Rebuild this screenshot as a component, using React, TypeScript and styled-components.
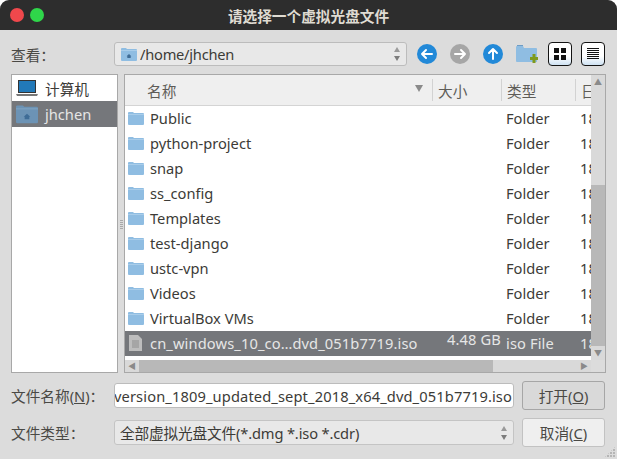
import React from "react";
import styled, { createGlobalStyle } from "styled-components";

const GlobalStyle = createGlobalStyle`
  html, body {
    margin: 0;
    padding: 0;
    background: #ffffff;
  }
  * {
    box-sizing: border-box;
  }
`;

const fontStack = `"Noto Sans", "Noto Sans CJK SC", sans-serif`;

const Dialog = styled.div`
  position: relative;
  width: 617px;
  height: 459px;
  display: flex;
  flex-direction: column;
  background: #dcdcdc;
  border-radius: 9px 9px 0 0;
  overflow: hidden;
  font-family: ${fontStack};
  font-size: 14.67px;
  color: #3c3b37;
`;

const TitleBar = styled.div`
  position: relative;
  height: 30px;
  flex: none;
  display: flex;
  align-items: center;
  justify-content: center;
  background: #2d2d2d;
  color: #dfdbd2;
  font-size: 14.67px;
  font-weight: 700;
`;

const WindowButtons = styled.div`
  position: absolute;
  left: 10px;
  top: 8px;
  display: flex;
  gap: 6px;
`;

const WindowButton = styled.span<{ $color: string }>`
  width: 14px;
  height: 14px;
  border-radius: 50%;
  background: ${(p) => p.$color};
`;

const Body = styled.div`
  flex: 1;
  display: flex;
  flex-direction: column;
  padding: 12px 11px 0 11px;
`;

const Toolbar = styled.div`
  height: 24px;
  display: flex;
  align-items: center;
`;

const FieldLabel = styled.label`
  width: 103px;
  flex: none;
  color: #4a4945;
`;

const Underlined = styled.span`
  text-decoration: underline;
`;

const PathCombo = styled.div`
  width: 293px;
  height: 24px;
  flex: none;
  display: flex;
  align-items: center;
  gap: 3px;
  padding-left: 6px;
  border: 1px solid #bcbcbc;
  border-radius: 3px;
  background: #e8e8e8;
  letter-spacing: -0.25px;
`;

const ComboText = styled.span`
  flex: 1;
  white-space: nowrap;
  overflow: hidden;
  color: #3c3b37;
`;

const ToolIcons = styled.div`
  display: flex;
  align-items: center;
  margin-left: 10px;
  height: 24px;
`;

const NavIcon = styled.span`
  display: flex;
  width: 20px;
  height: 20px;
  margin-right: 13px;
`;

const NewFolderIcon = styled.span`
  display: flex;
  margin-right: 9px;
  margin-left: -1px;
`;

const ViewButton = styled.span<{ $last?: boolean }>`
  width: 24px;
  height: 24px;
  display: flex;
  align-items: center;
  justify-content: center;
  margin-right: ${(p) => (p.$last ? 0 : "9px")};
  border: 1px solid #141414;
  border-radius: 4px;
  background: linear-gradient(#ffffff 60%, #cfe2f3);
`;

const Browser = styled.div`
  display: flex;
  gap: 6px;
  height: 299px;
  margin-top: 8px;
`;

const Sidebar = styled.div`
  width: 107px;
  flex: none;
  border: 1px solid #a8a8a8;
  background: #ffffff;
`;

const SideItem = styled.div<{ $selected?: boolean }>`
  height: 26px;
  display: flex;
  align-items: center;
  gap: 7px;
  padding-left: 4px;
  background: ${(p) => (p.$selected ? "#75777b" : "transparent")};
  color: ${(p) => (p.$selected ? "#e6e6e6" : "#3c3b37")};
`;

const FileList = styled.div`
  position: relative;
  width: 482px;
  flex: none;
  display: grid;
  grid-template-columns: 466px 14px;
  grid-template-rows: 285px 12px;
  border: 1px solid #a8a8a8;
  background: #ffffff;
`;

const ListMain = styled.div`
  min-width: 0;
  overflow: hidden;
`;

const Grip = styled.span`
  position: absolute;
  left: -5px;
  top: 145px;
  width: 3px;
  height: 10px;
  background: repeating-linear-gradient(#a9a9a9 0 1px, transparent 1px 2px);
`;

const Header = styled.div`
  height: 31px;
  display: grid;
  grid-template-columns: 308px 69px 74px 1fr;
  background: #efefef;
  border-bottom: 1px solid #d4d4d4;
`;

const HeaderCell = styled.div<{ $inset?: number }>`
  display: flex;
  align-items: center;
  justify-content: space-between;
  padding-left: ${(p) => p.$inset ?? 5}px;
  padding-right: 10px;
  color: #5e5c57;
  white-space: nowrap;
  overflow: hidden;
  position: relative;
  &:not(:last-child)::after {
    content: "";
    position: absolute;
    right: 0;
    top: 4px;
    bottom: 4px;
    width: 1px;
    background: #d2d2d2;
  }
`;

const SortArrow = styled.span`
  width: 0;
  height: 0;
  border-left: 4px solid transparent;
  border-right: 4px solid transparent;
  border-top: 7px solid #8a8a8a;
  margin-top: -4px;
`;

const Row = styled.div<{ $selected?: boolean }>`
  height: 25px;
  display: grid;
  grid-template-columns: 308px 69px 74px 1fr;
  align-items: center;
  padding-bottom: 2px;
  background: ${(p) => (p.$selected ? "#75777b" : "transparent")};
  color: ${(p) => (p.$selected ? "#e6e6e6" : "#3c3b37")};
  letter-spacing: ${(p) => (p.$selected ? "0.12px" : "0")};
  white-space: nowrap;
`;

const NameCell = styled.div`
  display: flex;
  align-items: center;
  gap: 6px;
  padding-left: 3px;
  overflow: hidden;
`;

const SizeCell = styled.div`
  text-align: right;
  padding-right: 1px;
  margin-top: -8px;
`;

const TextCell = styled.div`
  padding-left: 4px;
  overflow: hidden;
`;

const VScroll = styled.div`
  display: flex;
  flex-direction: column;
  background: #d9d9d9;
`;

const HScroll = styled.div`
  display: flex;
  background: #d9d9d9;
`;

const Arrow = styled.span<{ $box: "v" | "h" }>`
  flex: none;
  display: flex;
  align-items: center;
  justify-content: center;
  width: 14px;
  height: ${(p) => (p.$box === "v" ? "14px" : "12px")};
  color: #8a8a8a;
  font-size: 8px;
  line-height: 1;
`;

const VTrack = styled.div`
  flex: 1;
  display: flex;
  flex-direction: column;
  padding-top: 96px;
`;

const VThumb = styled.div`
  flex: 1;
  background: #b8b8b8;
`;

const HTrack = styled.div`
  flex: 1;
  display: flex;
`;

const HThumb = styled.div`
  width: 354px;
  background: #b8b8b8;
`;

const Corner = styled.div`
  background: #dcdcdc;
`;

const FormRow = styled.div<{ $top: number }>`
  display: flex;
  align-items: center;
  height: 29px;
  margin-top: ${(p) => p.$top}px;
`;

const NameInput = styled.div`
  width: 400px;
  height: 25px;
  flex: none;
  display: flex;
  justify-content: flex-end;
  align-items: center;
  padding-right: 1px;
  border: 1px solid #bcbcbc;
  border-radius: 3px;
  background: #ffffff;
  color: #3c3b37;
  letter-spacing: 0.12px;
  white-space: nowrap;
  overflow: hidden;
`;

const TypeCombo = styled.div`
  width: 400px;
  height: 25px;
  flex: none;
  display: flex;
  align-items: center;
  padding-left: 5px;
  border: 1px solid #c4c4c4;
  border-radius: 3px;
  background: #e8e8e8;
  letter-spacing: -0.15px;
  white-space: nowrap;
`;

const ActionButton = styled.button<{ $default?: boolean }>`
  width: 83px;
  height: 29px;
  margin-left: 8px;
  padding: 0;
  font: inherit;
  color: #4a4945;
  border: 1px solid ${(p) => (p.$default ? "#a6a6a6" : "#c2c2c2")};
  border-radius: 3px;
  background: ${(p) => (p.$default ? "#d9d9d9" : "#efefef")};
`;

const ResizeGrip = styled.span`
  position: absolute;
  right: 1px;
  bottom: 1px;
  width: 12px;
  height: 12px;
  background: radial-gradient(circle at 1px 1px, #b5b5b5 1px, transparent 1px) 0 0 / 3px 3px;
  clip-path: polygon(100% 0, 100% 100%, 0 100%);
`;

const Folder = ({
  size = 16,
  home = false,
  dim = false,
}: {
  size?: number;
  home?: boolean;
  dim?: boolean;
}) => (
  <svg width={size} height={size * 0.875} viewBox="0 0 16 14" style={{ flex: "none" }}>
    <path
      d="M0 2a1 1 0 0 1 1-1h4l1 1h9a1 1 0 0 1 1 1v10a1 1 0 0 1-1 1H1a1 1 0 0 1-1-1z"
      fill={dim ? "#6c93b5" : "#8fbde2"}
    />
    <rect x="0" y="3" width="16" height="1" fill={dim ? "#7ba0bf" : "#a9cdea"} />
    {home && <path d="M8 7l2.400 2.200H9.700V11H6.300V9.200h-.7z" fill="#3f6c96" />}
  </svg>
);

const FileIcon = () => (
  <svg width="13" height="16" viewBox="0 0 13 16" style={{ flex: "none", margin: "0 2px 0 1px" }}>
    <path d="M0 0h9l4 4v12H0z" fill="#bdbdbd" />
    <path d="M3 6h7M3 8h7M3 10h7M3 12h7" stroke="#8f8f8f" strokeWidth="1" />
  </svg>
);

const Laptop = () => (
  <svg width="22" height="17" viewBox="0 0 22 17" style={{ flex: "none" }}>
    <rect x="2.500" y="0.500" width="17" height="12" fill="#2279b8" stroke="#333" />
    <path d="M0 14h22l-1 2H1z" fill="#777" />
  </svg>
);

const CircleArrow = ({ color, d }: { color: string; d: string }) => (
  <svg width="20" height="20" viewBox="0 0 20 20">
    <circle cx="10" cy="10" r="10" fill={color} />
    <path d={d} fill="none" stroke="#fff" strokeWidth="2" strokeLinecap="round" strokeLinejoin="round" />
  </svg>
);

const NewFolder = () => (
  <svg width="24" height="20" viewBox="0 0 24 20">
    <path d="M1 3a1 1 0 0 1 1-1h6l1 2h12a1 1 0 0 1 1 1v13H2a1 1 0 0 1-1-1z" fill="#8fbde2" />
    <path d="M2 1.500h6" stroke="#6f9cc4" />
    <path d="M15 13h8v3h-8zM17.500 10h3v9h-3z" fill="#7f9a1c" />
  </svg>
);

const IconGrid = () => (
  <svg width="14" height="14" viewBox="0 0 14 14">
    <path d="M1 1h5v5H1zM8 1h5v5H8zM1 8h5v5H1zM8 8h5v5H8z" fill="#111" />
  </svg>
);

const IconList = () => (
  <svg width="14" height="14" viewBox="0 0 14 14">
    <path d="M1 1.500h12M1 3.500h12M1 5.500h12M1 7.500h12M1 9.500h12M1 11.500h12" stroke="#111" />
  </svg>
);

const Updown = () => (
  <svg width="6" height="16" viewBox="0 0 6 16" style={{ flex: "none", marginRight: 6 }}>
    <path d="M3 1l3 5H0z" fill="#9a9a9a" />
    <path d="M3 15L0 10h6z" fill="#7c7c7c" />
  </svg>
);

const folders = [
  "Public",
  "python-project",
  "snap",
  "ss_config",
  "Templates",
  "test-django",
  "ustc-vpn",
  "Videos",
  "VirtualBox VMs",
];

const App = () => {
  return (
    <Dialog>
      <GlobalStyle />
      <TitleBar>
        <WindowButtons>
          <WindowButton $color="#f0484c" />
          <WindowButton $color="#2fd64a" />
        </WindowButtons>
        请选择一个虚拟光盘文件
      </TitleBar>
      <Body>
        <Toolbar>
          <FieldLabel>查看：</FieldLabel>
          <PathCombo>
            <Folder home />
            <ComboText>/home/jhchen</ComboText>
            <Updown />
          </PathCombo>
          <ToolIcons>
            <NavIcon>
              <CircleArrow color="#2289d8" d="M15 10H5M9 6l-4 4 4 4" />
            </NavIcon>
            <NavIcon>
              <CircleArrow color="#a6a6a6" d="M5 10h10M11 6l4 4-4 4" />
            </NavIcon>
            <NavIcon>
              <CircleArrow color="#2289d8" d="M10 15V5M6 9l4-4 4 4" />
            </NavIcon>
            <NewFolderIcon>
              <NewFolder />
            </NewFolderIcon>
            <ViewButton>
              <IconGrid />
            </ViewButton>
            <ViewButton $last>
              <IconList />
            </ViewButton>
          </ToolIcons>
        </Toolbar>
        <Browser>
          <Sidebar>
            <SideItem>
              <Laptop />
              计算机
            </SideItem>
            <SideItem $selected>
              <Folder size={22} home dim />
              jhchen
            </SideItem>
          </Sidebar>
          <FileList>
            <Grip />
            <ListMain>
              <Header>
                <HeaderCell $inset={22}>
                  名称
                  <SortArrow />
                </HeaderCell>
                <HeaderCell>大小</HeaderCell>
                <HeaderCell>类型</HeaderCell>
                <HeaderCell>日</HeaderCell>
              </Header>
              {folders.map((name) => (
                <Row key={name}>
                  <NameCell>
                    <Folder />
                    {name}
                  </NameCell>
                  <SizeCell />
                  <TextCell>Folder</TextCell>
                  <TextCell>18</TextCell>
                </Row>
              ))}
              <Row $selected>
                <NameCell>
                  <FileIcon />
                  cn_windows_10_co…dvd_051b7719.iso
                </NameCell>
                <SizeCell>4.48 GB</SizeCell>
                <TextCell>iso File</TextCell>
                <TextCell>18</TextCell>
              </Row>
            </ListMain>
            <VScroll>
              <Arrow $box="v">▲</Arrow>
              <VTrack>
                <VThumb />
              </VTrack>
              <Arrow $box="v">▼</Arrow>
            </VScroll>
            <HScroll>
              <Arrow $box="h">◀</Arrow>
              <HTrack>
                <HThumb />
              </HTrack>
              <Arrow $box="h">▶</Arrow>
            </HScroll>
            <Corner />
          </FileList>
        </Browser>
        <FormRow $top={8}>
          <FieldLabel>
            文件名称(<Underlined>N</Underlined>)：
          </FieldLabel>
          <NameInput>version_1809_updated_sept_2018_x64_dvd_051b7719.iso</NameInput>
          <ActionButton $default>
            打开(<Underlined>O</Underlined>)
          </ActionButton>
        </FormRow>
        <FormRow $top={8}>
          <FieldLabel>文件类型：</FieldLabel>
          <TypeCombo>
            <ComboText>全部虚拟光盘文件(*.dmg *.iso *.cdr)</ComboText>
            <Updown />
          </TypeCombo>
          <ActionButton>
            取消(<Underlined>C</Underlined>)
          </ActionButton>
        </FormRow>
      </Body>
      <ResizeGrip />
    </Dialog>
  );
};

export default App;
